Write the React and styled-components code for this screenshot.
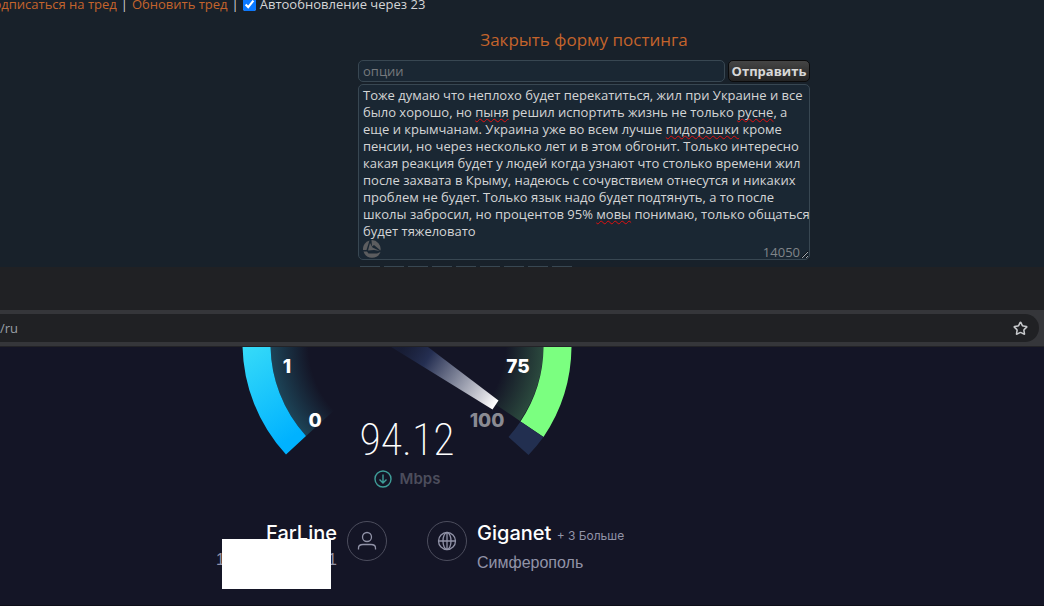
import styled, { createGlobalStyle } from "styled-components"
import { Star } from "lucide-react"

const lines = [
    ["Тоже думаю что неплохо будет перекатиться, жил при Украине и все"],
    ["было хорошо, но ", "*пыня", " решил испортить жизнь не только ", "*русне", ", а"],
    ["еще и крымчанам. Украина уже во всем лучше ", "*пидорашки", " кроме"],
    ["пенсии, но через несколько лет и в этом обгонит. Только интересно"],
    ["какая реакция будет у людей когда узнают что столько времени жил"],
    ["после захвата в Крыму, надеюсь с сочувствием отнесутся и никаких"],
    ["проблем не будет. Только язык надо будет подтянуть, а то после"],
    ["школы забросил, но процентов 95% ", "*мовы", " понимаю, только общаться"],
    ["будет тяжеловато"],
]
const message = lines.map(line => line.join("").replace(/\*/g, "")).join("\n")

export default function App(){
    return(<>
    <Global />
    <Page>
        <Forum />
        <Browser />
        <Speed />
    </Page></>)
}

function Forum(){
    return(<Board>
        <ThreadBar>
            <Link href="#subscribe">Подписаться на тред</Link>
            <span>|</span>
            <Link href="#update">Обновить тред</Link>
            <span>|</span>
            <Auto><input type="checkbox" defaultChecked />Автообновление через 23</Auto>
        </ThreadBar>
        <PostForm onSubmit={e => e.preventDefault()}>
            <Link href="#close">Закрыть форму постинга</Link>
            <OptionsRow>
                <Options aria-label="опции" placeholder="опции" />
                <Submit>Отправить</Submit>
            </OptionsRow>
            <Editor>
                <Message aria-label="Сообщение" wrap="off" spellCheck={false} defaultValue={message} />
                <Spelling aria-hidden="true">
                    {lines.map((line, i) => <div key={i}>
                        {line.map((part, j) => part[0] === "*" ? <u key={j}>{part.slice(1)}</u> : part)}
                    </div>)}
                </Spelling>
                <Sail viewBox="0 0 18 18">
                    <path d="M6.500 0.500 A9 9 0 0 0 0 10 H3.500 Z" fill="#5c5d5f" />
                    <path d="M8.500 0 L9 6.500 L11 5 L17.500 10.500 A9 9 0 0 0 8.500 0 Z" fill="#5c5d5f" />
                    <path d="M7 3 L5 10.500 L11 10 L17 11 L9.500 7.500 Z" fill="#5c5d5f" />
                    <path d="M0.500 11.500 H4 L5.500 13.500 H14 L17.500 12 A9 9 0 0 1 0.500 11.500 Z" fill="#5c5d5f" />
                </Sail>
                <Counter>14050</Counter>
            </Editor>
            <Marks>
                {Array.from({ length: 9 }, (_, i) => <i key={i} />)}
            </Marks>
        </PostForm>
    </Board>)
}

function Browser(){
    return(<>
        <TabStrip />
        <Toolbar>
            <Address aria-label="Address" defaultValue="/ru" />
            <StarButton aria-label="Bookmark"><Star size={15} strokeWidth={2.5} /></StarButton>
        </Toolbar>
    </>)
}

function Speed(){
    return(<Result>
        <Gauge viewBox="242 347 330 112">
            <defs>
                <linearGradient id="blue" x1="0" y1="0" x2="0.4" y2="1">
                    <stop offset="0" stopColor="#38dcf8" />
                    <stop offset="1" stopColor="#00b2ff" />
                </linearGradient>
                <radialGradient id="blueGlow" gradientUnits="userSpaceOnUse" cx="407" cy="344" r="137">
                    <stop offset="0.72" stopColor="#1f5064" stopOpacity="0" />
                    <stop offset="1" stopColor="#1f5064" stopOpacity="0.8" />
                </radialGradient>
                <radialGradient id="greenGlow" gradientUnits="userSpaceOnUse" cx="407" cy="344" r="137">
                    <stop offset="0.72" stopColor="#356048" stopOpacity="0" />
                    <stop offset="1" stopColor="#356048" stopOpacity="0.7" />
                </radialGradient>
                <linearGradient id="needle" gradientUnits="userSpaceOnUse" x1="405" y1="344" x2="495" y2="404">
                    <stop offset="0" stopColor="#1b2442" stopOpacity="0.5" />
                    <stop offset="0.25" stopColor="#252f52" />
                    <stop offset="0.9" stopColor="#dedee3" />
                    <stop offset="1" stopColor="#fff" />
                </linearGradient>
            </defs>
            <path d="M407 344 H270.5 A136.5 136.5 0 0 0 306 436 Z" fill="url(#blueGlow)" />
            <path d="M407 344 H543.5 A136.5 136.5 0 0 1 520 421 Z" fill="url(#greenGlow)" />
            <path d="M242.5 344 A164.5 164.5 0 0 0 286 454.5 L306 436 A136.5 136.5 0 0 1 270.5 344 Z" fill="url(#blue)" />
            <path d="M571.5 344 A164.5 164.5 0 0 1 543.5 437 L520.5 421.5 A136.5 136.5 0 0 0 543.5 344 Z" fill="#7bff80" />
            <path d="M543.5 437 A164.5 164.5 0 0 1 528.5 455 L508.5 437 A136.5 136.5 0 0 0 520.5 421.5 Z" fill="#222f50" />
            <path d="M388 345 L424 344 L498.500 400.500 L492.500 409.500 Z" fill="url(#needle)" />
            <Mark x="287" y="373">1</Mark>
            <Mark x="315" y="427">0</Mark>
            <Mark x="518" y="373">75</Mark>
            <Mark x="487" y="427" $dim>100</Mark>
            <Value x="407" y="455">94.12</Value>
        </Gauge>
        <Unit>
            <svg width="18" height="18" viewBox="0 0 18 18" fill="none" stroke="#3f9d98" strokeWidth="1.4">
                <circle cx="9" cy="9" r="8" />
                <path d="M9 4.500 V13 M5.500 9.500 L9 13 L12.500 9.500" />
            </svg>
            Mbps
        </Unit>
        <Providers>
            <Provider $right>
                <Name>FarLine</Name>
                <Ip><span>1</span><span>1</span></Ip>
                <Cover />
            </Provider>
            <Circles>
                <Circle>
                    <svg width="20" height="20" viewBox="0 0 20 20">
                        <circle cx="10" cy="6" r="4.500" />
                        <path d="M1.500 18.500 V17 C1.500 14.500 3.500 13.500 6 13.500 H14 C16.500 13.500 18.500 14.500 18.500 17 V18.500" />
                    </svg>
                </Circle>
                <Circle>
                    <svg width="20" height="20" viewBox="0 0 20 20">
                        <circle cx="10" cy="10" r="8.500" />
                        <ellipse cx="10" cy="10" rx="4" ry="8.500" />
                        <path d="M10 1.500 V18.500 M1.500 10 H18.500" />
                    </svg>
                </Circle>
            </Circles>
            <Provider>
                <Name>Giganet <More href="#more">+ 3 Больше</More></Name>
                <Place>Симферополь</Place>
            </Provider>
        </Providers>
    </Result>)
}

const Global = createGlobalStyle`
*{
    box-sizing: border-box;
}
body{
    margin: 0;
    background: #141526;
}
`

const Page = styled.div`
display: flex;
flex-direction: column;
min-height: 100vh;
overflow: hidden;
`

const Board = styled.section`
background: #18212a;
color: #d4d5d6;
font-family: "Open Sans", "Noto Sans", sans-serif;
font-size: 13px;
overflow: hidden;
`

const ThreadBar = styled.nav`
display: flex;
align-items: center;
gap: 4px;
height: 20px;
margin: -6px 0 0 -16px;
white-space: nowrap;
`

const Link = styled.a`
color: #c4642c;
text-decoration: none;
`

const Auto = styled.label`
display: flex;
align-items: center;
gap: 4px;
input{
    width: 13px;
    height: 13px;
    margin: 0;
    accent-color: #0a78ff;
}
`

const PostForm = styled.form`
display: flex;
flex-direction: column;
align-items: center;
padding: 14px 0 0 124px;
> a{
    font-size: 17px;
    line-height: 24px;
    margin-bottom: 8px;
}
`

const OptionsRow = styled.div`
display: flex;
gap: 3px;
width: 452px;
margin-bottom: 2px;
`

const Options = styled.input`
flex: 1;
min-width: 0;
height: 22px;
padding: 0 4px;
border: 1px solid #384752;
border-radius: 5px;
background: #1a2733;
color: #cfd0d1;
font: inherit;
&::placeholder{
    color: #76797d;
}
`

const Submit = styled.button`
width: 82px;
height: 22px;
padding: 0;
border: 1px solid #0b0b0c;
border-radius: 5px;
background: linear-gradient(#454545, #242424);
color: #d8d8d8;
font: inherit;
font-weight: 700;
`

const Editor = styled.div`
position: relative;
width: 452px;
height: 176px;
`

const Message = styled.textarea`
display: block;
width: 100%;
height: 100%;
padding: 2px 0 2px 4px;
border: 1px solid #384752;
border-radius: 5px;
background: #1a2733;
color: #d4d5d6;
font: inherit;
line-height: 17px;
overflow: hidden;
`

const Spelling = styled.div`
position: absolute;
inset: 0;
padding: 3px 0 3px 5px;
color: transparent;
line-height: 17px;
white-space: pre;
pointer-events: none;
u{
    text-decoration: underline wavy #e01010 1px;
    text-decoration-skip-ink: none;
}
`

const Sail = styled.svg`
position: absolute;
left: 5px;
bottom: 2px;
width: 18px;
height: 18px;
`

const Counter = styled.span`
position: absolute;
right: 10px;
bottom: -1px;
color: #808589;
`

const Marks = styled.div`
display: flex;
gap: 4px;
width: 450px;
padding: 6px 0 0 1px;
i{
    width: 20px;
    height: 1px;
    background: #384752;
}
`

const TabStrip = styled.div`
height: 43px;
background: #202124;
`

const Toolbar = styled.div`
display: flex;
align-items: center;
position: relative;
padding: 4px 5px 4px 0;
background: #35363a;
border-bottom: 1px solid #232327;
`

const Address = styled.input`
flex: 1;
height: 28px;
padding: 0;
border: 0;
border-radius: 0 14px 14px 0;
background: #202124;
color: #9aa0a6;
font: 13px "Open Sans", sans-serif;
`

const StarButton = styled.button`
position: absolute;
right: 16px;
display: flex;
padding: 0;
border: 0;
background: none;
color: #c6c8cb;
`

const Result = styled.main`
display: flex;
flex: 1;
flex-direction: column;
align-items: center;
padding-right: 230px;
background: #141526;
border-bottom: 1px solid #0d0e18;
font-family: Inter, sans-serif;
`

const Gauge = styled.svg`
width: 330px;
height: 112px;
`

const Mark = styled.text`
fill: ${props => (props.$dim ? "#8a8a92" : "#fff")};
font: 800 19px Inter, sans-serif;
text-anchor: middle;
`

const Value = styled.text`
fill: #fff;
font: 200 44px "Roboto Condensed", Roboto, sans-serif;
text-anchor: middle;
`

const Unit = styled.div`
display: flex;
align-items: center;
gap: 8px;
margin-top: 10px;
color: #4c4d5c;
font-size: 15px;
font-weight: 600;
line-height: 20px;
`

const Providers = styled.div`
display: grid;
grid-template-columns: 1fr auto 1fr;
column-gap: 10px;
width: 100%;
margin-top: 32px;
`

const Provider = styled.div`
position: relative;
display: flex;
flex-direction: column;
align-items: ${props => (props.$right ? "flex-end" : "flex-start")};
gap: 4px;
white-space: nowrap;
`

const Name = styled.div`
color: #fff;
font-size: 20px;
font-weight: 500;
line-height: 24px;
`

const More = styled.a`
color: #9193a8;
font-size: 12px;
font-weight: 400;
text-decoration: none;
`

const Place = styled.div`
color: #9193a8;
font: 16px/22px "Liberation Sans", sans-serif;
`

const Ip = styled(Place)`
display: flex;
justify-content: space-between;
width: 121px;
`

const Cover = styled.div`
position: absolute;
top: 18px;
right: 6px;
width: 109px;
height: 50px;
background: #fff;
`

const Circles = styled.div`
display: flex;
gap: 40px;
`

const Circle = styled.div`
display: flex;
align-items: center;
justify-content: center;
width: 40px;
height: 40px;
border: 1px solid #4c4d5d;
border-radius: 50%;
svg{
    fill: none;
    stroke: #9193a8;
    stroke-width: 1.3;
}
`
